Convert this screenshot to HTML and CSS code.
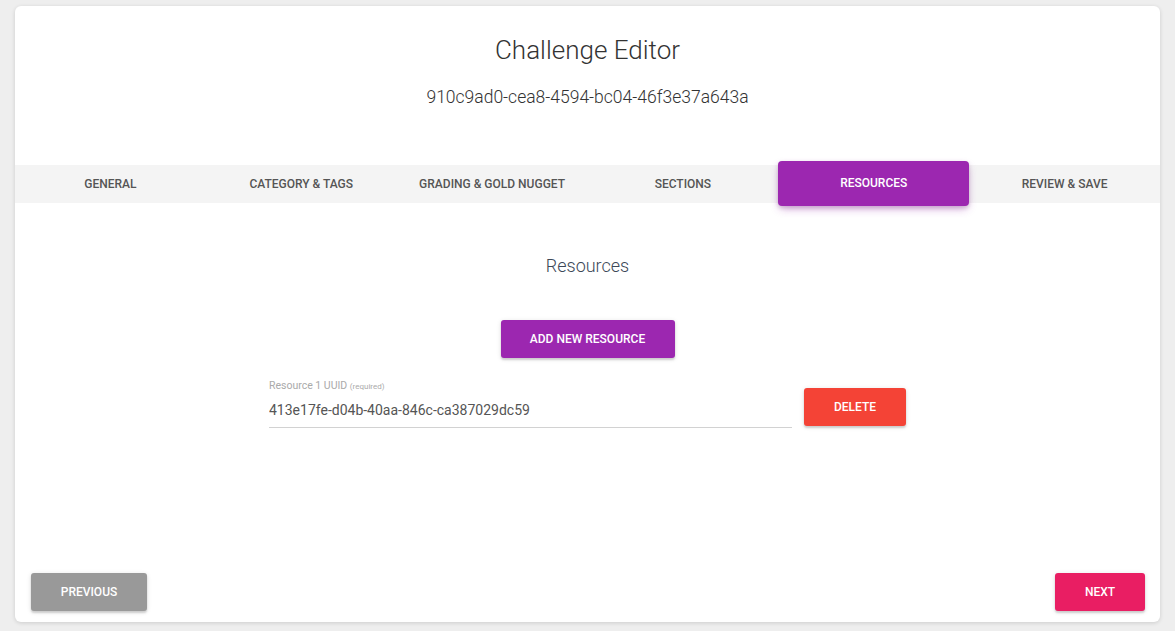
FILE: index.html
```html
<html>
    <head>
        <title>Challenge Editor</title>
        <link rel="stylesheet" href="styles.css">
    </head>
    <body>
        <div class="card">
            <div class="header">
                <h1>Challenge Editor</h1>
                <p class="uuid">910c9ad0-cea8-4594-bc04-46f3e37a643a</p>
            </div>

            <div class="tabs">
                <div class="tab">General</div>
                <div class="tab">Category &amp; Tags</div>
                <div class="tab">Grading &amp; Gold Nugget</div>
                <div class="tab">Sections</div>
                <div class="tab active">Resources</div>
                <div class="tab">Review &amp; Save</div>
            </div>

            <div class="content">
                <h2>Resources</h2>
                <button class="btn btn-purple add-btn">Add new resource</button>

                <div class="resource-row">
                    <div class="field">
                        <label>Resource 1 UUID <small>(required)</small></label>
                        <input type="text" value="413e17fe-d04b-40aa-846c-ca387029dc59">
                    </div>
                    <button class="btn btn-red">Delete</button>
                </div>
            </div>

            <div class="footer">
                <button class="btn btn-gray">Previous</button>
                <button class="btn btn-pink">Next</button>
            </div>
        </div>
    </body>
</html>
```

FILE: styles.css
```css
body {
    margin: 0;
    padding: 6px 15px 9px;
    background-color: #eeeeee;
    font-family: Roboto, "Noto Sans", sans-serif;
}
.card {
    background-color: white;
    border-radius: 6px;
    box-shadow: 0 1px 4px rgba(0,0,0,0.14);
    height: 616px;
    display: flex;
    flex-direction: column;
}
.header {
    text-align: center;
    padding-top: 29px;
    height: 130px;
    box-sizing: border-box;
}
h1 {
    margin: 0;
    font-size: 26px;
    font-weight: 300;
    line-height: 30px;
    color: #333333;
}
.uuid {
    margin: 21px 0 0;
    font-size: 17.5px;
    font-weight: 300;
    line-height: 22px;
    color: #333333;
}
.tabs {
    margin-top: 29px;
    display: flex;
    height: 38px;
    background-color: #f4f4f4;
}
.tab {
    flex: 1;
    display: flex;
    align-items: center;
    justify-content: center;
    text-transform: uppercase;
    font-size: 12px;
    font-weight: 500;
    color: #555555;
}
.tab.active {
    margin: -4px 0 -3px;
    padding-bottom: 1px;
    background-color: #9c27b0;
    color: white;
    border-radius: 4px;
    box-shadow: 0 4px 10px -2px rgba(156,39,176,0.45), 0 2px 4px rgba(0,0,0,0.15);
}
.content {
    display: flex;
    flex-direction: column;
    align-items: center;
}
h2 {
    margin: 52px 0 0;
    font-size: 18px;
    font-weight: 300;
    line-height: 22px;
    color: #3c4858;
}
.btn {
    border: none;
    border-radius: 3px;
    height: 38px;
    padding: 0 29px;
    font-family: Roboto, "Noto Sans", sans-serif;
    font-size: 12px;
    font-weight: 500;
    text-transform: uppercase;
    color: white;
    cursor: pointer;
    box-shadow: 0 2px 2px rgba(0,0,0,0.14), 0 1px 5px rgba(0,0,0,0.12);
}
.btn-purple { background-color: #9c27b0; }
.btn-red { background-color: #f44336; width: 102px; padding: 0; margin-bottom: 2px; }
.btn-gray { background-color: #999999; width: 116px; padding: 0; }
.btn-pink { background-color: #e91e63; width: 90px; padding: 0; }
.add-btn {
    margin-top: 43px;
    width: 174px;
    padding: 0;
}
.resource-row {
    margin-top: 21px;
    display: flex;
    align-items: flex-end;
    gap: 12px;
}
.field {
    width: 523px;
    display: flex;
    flex-direction: column;
}
.field label {
    font-size: 10.5px;
    line-height: 14px;
    color: #aaaaaa;
}
.field small {
    font-size: 8px;
}
.field input {
    margin-top: 6px;
    border: none;
    border-bottom: 1px solid #d2d2d2;
    padding: 0 0 7px;
    font-family: Roboto, "Noto Sans", sans-serif;
    font-size: 14px;
    line-height: 20px;
    color: #555555;
    outline: none;
}
.footer {
    margin-top: auto;
    display: flex;
    justify-content: space-between;
    padding: 0 15px 11px 16px;
}
```
